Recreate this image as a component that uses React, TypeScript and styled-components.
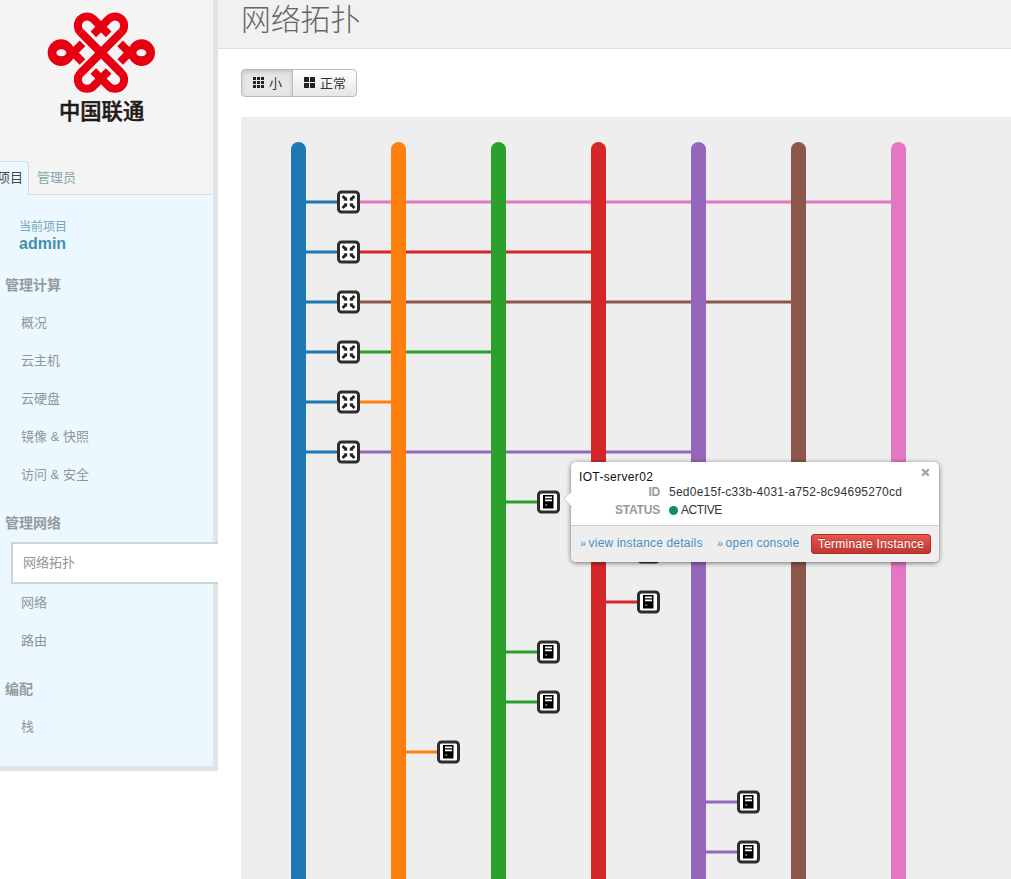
import React from "react";
import styled, { createGlobalStyle, css } from "styled-components";

const GlobalStyle = createGlobalStyle`
  * { box-sizing: border-box; }
  html, body { margin: 0; padding: 0; background: #fff; }
  body {
    overflow: hidden;
    font-family: "Liberation Sans", "Noto Sans CJK SC", sans-serif;
    font-size: 13px;
    color: #333;
  }
`;

const Page = styled.div`
  display: flex;
  align-items: flex-start;
  height: 879px;
  overflow: hidden;
`;

const Sidebar = styled.aside`
  flex: none;
  width: 218px;
  height: 771px;
  display: flex;
  flex-direction: column;
  background: #f4f4f4;
  border-right: 5px solid #e3e3e3;
  border-bottom: 5px solid #e3e3e3;
`;

const Brand = styled.div`
  height: 161px;
  padding: 12px 0 0 47px;
`;

const BrandMark = styled.svg`
  display: block;
  width: 109px;
  height: 83px;
`;

const BrandName = styled.div`
  margin: 3px 0 0 12px;
  font: 500 21.3px/24px "Noto Sans CJK SC", sans-serif;
  -webkit-text-stroke: 0.5px #231815;
  color: #231815;
  white-space: nowrap;
`;

const Tabs = styled.div`
  display: flex;
  height: 34px;
  border-bottom: 1px solid #d9dcde;
`;

const Tab = styled.div<{ $active?: boolean }>`
  height: 34px;
  line-height: 33px;
  white-space: nowrap;
  color: #86a5ac;
  padding-left: 8px;
  ${(p) =>
    p.$active &&
    css`
      display: flex;
      justify-content: flex-end;
      width: 29px;
      padding: 0 5px 0 0;
      line-height: 31px;
      color: #444;
      background: #ecf8ff;
      border: 1px solid #d9dcde;
      border-width: 1px 1px 0 0;
      border-radius: 0 4px 0 0;
    `}
`;

const SideBody = styled.div`
  flex: 1;
  background: #ecf8ff;
`;

const Project = styled.div`
  height: 71px;
  padding: 23px 0 0 19px;
`;

const ProjectLabel = styled.div`
  font-size: 12px;
  line-height: 18px;
  color: #6fa6bb;
`;

const ProjectName = styled.div`
  font-size: 16px;
  line-height: 15px;
  font-weight: 700;
  color: #468fac;
`;

const Section = styled.section`
  margin-bottom: 10px;
`;

const SectionTitle = styled.h4`
  margin: 0;
  padding-left: 5px;
  font-size: 14px;
  line-height: 38px;
  font-weight: 700;
  color: #959b9d;
`;

const NavItem = styled.div<{ $active?: boolean }>`
  height: 38px;
  line-height: 38px;
  padding-left: 21px;
  color: #8f9699;
  ${(p) =>
    p.$active &&
    css`
      width: 207px;
      height: 42px;
      margin-left: 11px;
      padding-left: 10px;
      background: #fff;
      border: 2px solid #cfd3d5;
      border-right: 0;
    `}
`;

const Main = styled.main`
  flex: 1;
  min-width: 0;
`;

const TitleBar = styled.header`
  height: 49px;
  padding-left: 23px;
  background: #f1f1f1;
  border-bottom: 1px solid #dfdfdf;
`;

const Title = styled.h1`
  margin: 0;
  font: 300 29.8px/34px "Noto Sans CJK SC", sans-serif;
  color: #666;
`;

const Toolbar = styled.div`
  display: flex;
  padding: 20px 0 20px 23px;
`;

const SizeButton = styled.button<{ $active?: boolean }>`
  display: flex;
  align-items: center;
  gap: 4px;
  height: 28px;
  width: ${(p) => (p.$active ? 52 : 65)}px;
  padding: 0 0 1px 11px;
  font: 13px "Liberation Sans", "Noto Sans CJK SC", sans-serif;
  color: #333;
  white-space: nowrap;
  border: 1px solid #bbb;
  background: ${(p) => (p.$active ? "#e6e6e6" : "linear-gradient(#fff, #e6e6e6)")};
  box-shadow: ${(p) => (p.$active ? "inset 0 2px 4px rgba(0,0,0,.15)" : "none")};
  border-radius: ${(p) => (p.$active ? "4px 0 0 4px" : "0 4px 4px 0")};
  margin-left: ${(p) => (p.$active ? 0 : -1)}px;
  svg {
    margin-top: 1px;
  }
`;

const Canvas = styled.div`
  position: relative;
  height: 762px;
  margin-left: 23px;
  background: #eee;
`;

const Drawing = styled.svg`
  display: block;
`;

const Balloon = styled.div`
  position: absolute;
  left: 330px;
  top: 345px;
  width: 368px;
  height: 100px;
  background: #fff;
  border-radius: 5px;
  box-shadow: 0 1px 5px rgba(0, 0, 0, 0.55);
  font-size: 12px;
  letter-spacing: 0.25px;
  white-space: nowrap;
`;

const Pointer = styled.svg`
  position: absolute;
  left: -8px;
  top: 29px;
`;

const Close = styled.svg`
  position: absolute;
  right: 9px;
  top: 6px;
`;

const BalloonBody = styled.div`
  height: 63px;
  padding: 8px 0 0 8px;
`;

const InstanceName = styled.div`
  margin-bottom: -2px;
  line-height: 15px;
  letter-spacing: 0.35px;
  color: #111;
`;

const Detail = styled.div`
  display: flex;
  align-items: center;
  height: 18px;
`;

const Term = styled.span`
  width: 81px;
  margin-right: 9px;
  text-align: right;
  font-weight: 700;
  letter-spacing: -0.2px;
  color: #999;
`;

const ActiveDot = styled.span`
  width: 9px;
  height: 9px;
  margin-right: 3px;
  border-radius: 50%;
  background: #0e9258;
`;

const StatusText = styled.span`
  letter-spacing: -0.4px;
`;

const BalloonFooter = styled.div`
  display: flex;
  align-items: center;
  height: 37px;
  padding-left: 9px;
  background: #eee;
  border-top: 1px solid #ccc;
  border-radius: 0 0 5px 5px;
`;

const ActionLink = styled.a<{ $width: number }>`
  width: ${(p) => p.$width}px;
  color: #4790c2;
  margin-top: -3px;
  word-spacing: -0.3px;
  letter-spacing: 0.22px;
`;

const Marker = styled.span`
  margin-right: -1px;
  font-size: 11px;
`;

const DangerButton = styled.button`
  width: 120px;
  height: 20px;
  padding: 0;
  font: 12px/16px "Liberation Sans", sans-serif;
  letter-spacing: 0.27px;
  color: #fff;
  text-shadow: 0 -1px 0 rgba(0, 0, 0, 0.25);
  border: 1px solid #a9302b;
  border-radius: 3px;
  background: linear-gradient(#e9574f, #be3630);
`;

const colors = ["#1f77b4", "#ff7f0e", "#2ca02c", "#d62728", "#9467bd", "#8c564b", "#e377c2"];

const routes = [6, 3, 5, 2, 1, 4];

const servers = [
  { net: 2, y: 385 },
  { net: 3, y: 435 },
  { net: 3, y: 485 },
  { net: 2, y: 535 },
  { net: 2, y: 585 },
  { net: 1, y: 635 },
  { net: 4, y: 685 },
  { net: 4, y: 735 },
];

const barX = (i: number) => 50 + i * 100;

const NodeBox = () => (
  <rect x="-10" y="-10" width="20" height="20" rx="3" fill="#fff" stroke="#2d2d2d" strokeWidth="3" />
);

const RouterNode = ({ x, y }: { x: number; y: number }) => (
  <g transform={`translate(${x} ${y})`}>
    <NodeBox />
    {[45, 135, 225, 315].map((a) => (
      <g key={a} transform={`rotate(${a})`}>
        <path d="M8.4 0H3.5" stroke="#222" strokeWidth="2.8" />
        <path d="M1.8 0L4.6 -2.6V2.6Z" fill="#222" />
      </g>
    ))}
  </g>
);

const ServerNode = ({ x, y }: { x: number; y: number }) => (
  <g transform={`translate(${x} ${y})`}>
    <NodeBox />
    <path d="M-5.5 -7H5V6.5H-5.5Z" fill="#000" />
    <path d="M-3.5 -4.6H3.5M-3.5 -1.6H3.5" stroke="#fff" strokeWidth="1.8" />
    <circle cx="-2.3" cy="3" r="1.1" fill="#3fa648" />
  </g>
);

const Topology = () => (
  <Drawing width="770" height="762" viewBox="0 0 770 762">
    {routes.map((net, i) => {
      const y = 85 + i * 50;
      return (
        <g key={net} strokeWidth="3">
          <path d={`M60 ${y}H100`} stroke={colors[0]} />
          <path d={`M115 ${y}H${barX(net) + 5}`} stroke={colors[net]} />
        </g>
      );
    })}
    {servers.map((s) => (
      <path key={s.y} d={`M${barX(s.net) + 10} ${s.y}h40`} stroke={colors[s.net]} strokeWidth="3" />
    ))}
    {colors.map((c, i) => (
      <rect key={c} x={barX(i)} y="25" width="15" height="780" rx="7.5" fill={c} />
    ))}
    {routes.map((net, i) => (
      <RouterNode key={net} x={107.5} y={85 + i * 50} />
    ))}
    {servers.map((s) => (
      <ServerNode key={s.y} x={barX(s.net) + 57.5} y={s.y} />
    ))}
  </Drawing>
);

const KnotLogo = () => (
  <BrandMark viewBox="51 36 327 249">
    <g fill="none" stroke="#e60012" strokeWidth="24">
      <path d="M236 103L190.4 57.6A27.4 27.4 0 1 0 151.6 96.4M235.6 57.6A27.4 27.4 0 1 1 274.4 96.4M235.6 57.6L190 103" />
      <path d="M236 213L190.4 258.4A27.4 27.4 0 1 1 151.6 219.6M235.6 258.4A27.4 27.4 0 1 0 274.4 219.6M235.6 258.4L190 213" />
      <path d="M111 139L157.5 186M111 177L157.5 130M317 139L270.5 186M317 177L270.5 130" />
      <path d="M151.6 96.4L274.4 219.6M274.4 96.4L151.6 219.6" strokeWidth="25" />
    </g>
    <circle cx="93" cy="158" r="40" fill="#e60012" />
    <circle cx="335" cy="158" r="40" fill="#e60012" />
    <ellipse cx="94" cy="158" rx="15" ry="10.5" fill="#f4f4f4" />
    <ellipse cx="334" cy="158" rx="15" ry="10.5" fill="#f4f4f4" />
  </BrandMark>
);

const SmallGridIcon = () => (
  <svg width="12" height="12" viewBox="0 0 12 12" fill="#222">
    {[0, 4, 8].map((y) => [0, 4, 8].map((x) => <rect key={`${x}-${y}`} x={x} y={y} width="3" height="3" />))}
  </svg>
);

const LargeGridIcon = () => (
  <svg width="12" height="12" viewBox="0 0 12 12" fill="#222">
    {[0, 6].map((y) => [0, 6].map((x) => <rect key={`${x}-${y}`} x={x} y={y} width="5" height="5" />))}
  </svg>
);

const sections = [
  { title: "管理计算", items: ["概况", "云主机", "云硬盘", "镜像 & 快照", "访问 & 安全"] },
  { title: "管理网络", items: ["网络拓扑", "网络", "路由"] },
  { title: "编配", items: ["栈"] },
];

export default function App() {
  return (
    <>
      <GlobalStyle />
      <Page>
        <Sidebar>
          <Brand>
            <KnotLogo />
            <BrandName>中国联通</BrandName>
          </Brand>
          <Tabs>
            <Tab $active>项目</Tab>
            <Tab>管理员</Tab>
          </Tabs>
          <SideBody>
            <Project>
              <ProjectLabel>当前项目</ProjectLabel>
              <ProjectName>admin</ProjectName>
            </Project>
            {sections.map((s) => (
              <Section key={s.title}>
                <SectionTitle>{s.title}</SectionTitle>
                {s.items.map((item) => (
                  <NavItem key={item} $active={item === "网络拓扑"}>
                    {item}
                  </NavItem>
                ))}
              </Section>
            ))}
          </SideBody>
        </Sidebar>
        <Main>
          <TitleBar>
            <Title>网络拓扑</Title>
          </TitleBar>
          <Toolbar>
            <SizeButton $active>
              <SmallGridIcon />小
            </SizeButton>
            <SizeButton>
              <LargeGridIcon />正常
            </SizeButton>
          </Toolbar>
          <Canvas>
            <Topology />
            <Balloon>
              <Pointer width="9" height="16" viewBox="0 0 9 16">
                <path d="M9 0L1 8L9 16" fill="#fff" stroke="#bbb" strokeWidth="0.7" />
              </Pointer>
              <Close width="9" height="9" viewBox="0 0 9 9">
                <path d="M1.2 1.2L7.8 7.8M7.8 1.2L1.2 7.8" stroke="#a3a3a3" strokeWidth="2.3" />
              </Close>
              <BalloonBody>
                <InstanceName>IOT-server02</InstanceName>
                <Detail>
                  <Term>ID</Term>5ed0e15f-c33b-4031-a752-8c94695270cd
                </Detail>
                <Detail>
                  <Term>STATUS</Term>
                  <ActiveDot />
                  <StatusText>ACTIVE</StatusText>
                </Detail>
              </BalloonBody>
              <BalloonFooter>
                <ActionLink $width={137}>
                  <Marker>»</Marker> view instance details
                </ActionLink>
                <ActionLink $width={94}>
                  <Marker>»</Marker> open console
                </ActionLink>
                <DangerButton>Terminate Instance</DangerButton>
              </BalloonFooter>
            </Balloon>
          </Canvas>
        </Main>
      </Page>
    </>
  );
}
